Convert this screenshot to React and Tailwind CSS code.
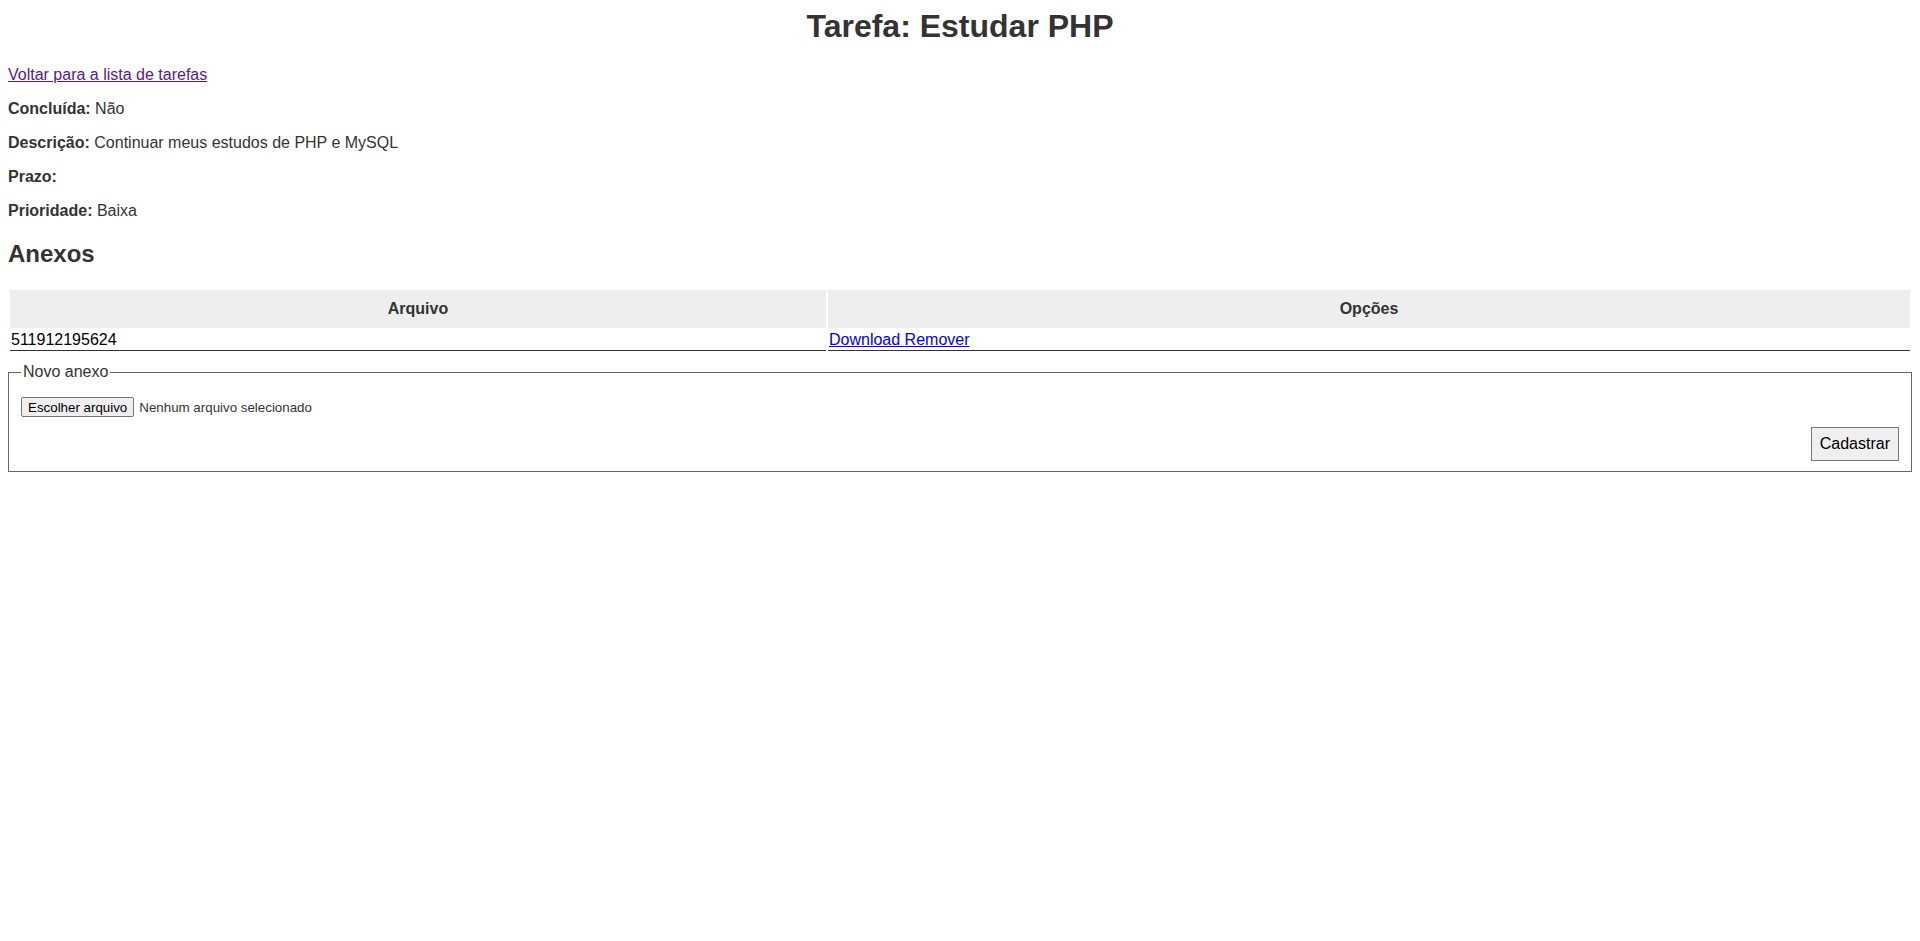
export default function App() {
  return (
    <div className="min-h-screen bg-white p-2 font-['Liberation_Sans',Arial,sans-serif] text-base leading-[normal] text-[#333]">
      <h1 className="mb-[21.44px] text-center text-[32px] font-bold leading-[normal]">Tarefa: Estudar PHP</h1>

      <p className="my-4">
        <a href="#" className="text-[#551a8b] underline">Voltar para a lista de tarefas</a>
      </p>
      <p className="my-4"><b>Concluída:</b> Não</p>
      <p className="my-4"><b>Descrição:</b> Continuar meus estudos de PHP e MySQL</p>
      <p className="my-4"><b>Prazo:</b> </p>
      <p className="my-4"><b>Prioridade:</b> Baixa</p>

      <h2 className="my-[19.92px] text-2xl font-bold leading-[normal]">Anexos</h2>

      <table className="w-full border-separate border-spacing-[2px]">
        <thead>
          <tr>
            <th className="w-[816px] bg-[#eee] px-[1px] py-[10px] text-center font-bold">Arquivo</th>
            <th className="bg-[#eee] px-[1px] py-[10px] text-center font-bold">Opções</th>
          </tr>
        </thead>
        <tbody>
          <tr>
            <td className="border-b border-[#333] p-[1px] text-left text-black">511912195624</td>
            <td className="border-b border-[#333] p-[1px] text-left">
              <a href="#" className="text-[#0000ee] underline">Download </a>
              <a href="#" className="text-[#0000ee] underline">Remover</a>
            </td>
          </tr>
        </tbody>
      </table>

      <form className="mt-[10px]">
        <fieldset className="border border-[#666] px-3 pt-[5.6px] pb-[10px]">
          <legend className="px-[2px]">Novo anexo</legend>
          <div className="mt-[10px] flex items-center">
            <button type="button" className="h-[20.5px] rounded-[2px] border border-[#767676] bg-[#efefef] px-[6px] text-[13.33px] leading-[normal] text-black">
              Escolher arquivo
            </button>
            <span className="ml-[5px] text-[13.33px]">Nenhum arquivo selecionado</span>
          </div>
          <div className="mt-[10px] flex justify-end">
            <button type="submit" className="border border-[#767676] bg-[#efefef] px-2 py-[7px] text-base leading-[normal] text-black">
              Cadastrar
            </button>
          </div>
        </fieldset>
      </form>
    </div>
  );
}
